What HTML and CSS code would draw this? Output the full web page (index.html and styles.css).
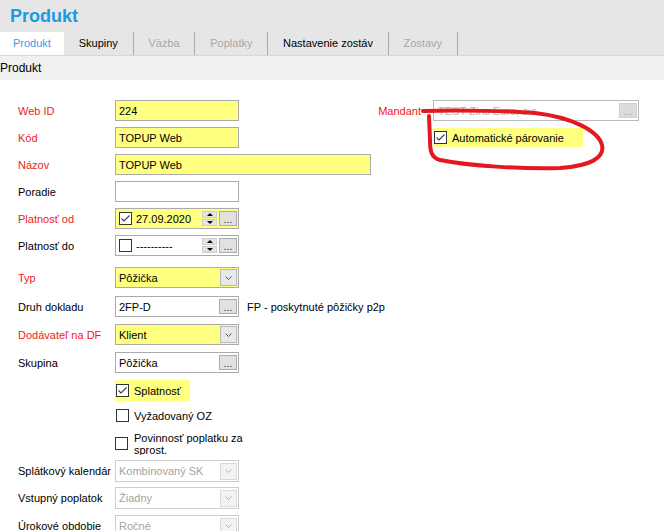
FILE: index.html
```html
<!DOCTYPE html>
<html lang="sk">
<head>
<meta charset="utf-8">
<title>Produkt</title>
<link rel="stylesheet" href="styles.css">
</head>
<body>
<div class="page">
  <header class="app-header">
    <h1 class="app-title">Produkt</h1>
    <nav class="tabs">
      <span class="tab tab-active">Produkt</span>
      <span class="tab">Skupiny</span>
      <span class="tab tab-disabled">Väzba</span>
      <span class="tab tab-disabled">Poplatky</span>
      <span class="tab">Nastavenie zostáv</span>
      <span class="tab tab-disabled">Zostavy</span>
    </nav>
  </header>
  <div class="section-strip">Produkt</div>

  <main class="form-area">
    <div class="form-col">
      <div class="row">
        <span class="lbl req">Web ID</span>
        <div class="field hl"><span class="val">224</span></div>
      </div>
      <div class="row">
        <span class="lbl req">Kód</span>
        <div class="field hl"><span class="val">TOPUP Web</span></div>
      </div>
      <div class="row">
        <span class="lbl req">Názov</span>
        <div class="field wide hl"><span class="val">TOPUP Web</span></div>
      </div>
      <div class="row">
        <span class="lbl">Poradie</span>
        <div class="field"><span class="val"></span></div>
      </div>
      <div class="row">
        <span class="lbl req">Platnosť od</span>
        <div class="field hl">
          <span class="cb"><svg width="11" height="11" viewBox="0 0 11 11"><polyline points="1.5,5.5 4,8 9.5,2.5" fill="none" stroke="#3c3c3c" stroke-width="1.1"/></svg></span>
          <span class="val date">27.09.2020</span>
          <span class="spin"><span class="spin-btn up"></span><span class="spin-btn down"></span></span>
          <span class="ellip">...</span>
        </div>
      </div>
      <div class="row">
        <span class="lbl">Platnosť do</span>
        <div class="field">
          <span class="cb"></span>
          <span class="val date">----------</span>
          <span class="spin"><span class="spin-btn up"></span><span class="spin-btn down"></span></span>
          <span class="ellip">...</span>
        </div>
      </div>
      <div class="row mt-11">
        <span class="lbl req">Typ</span>
        <div class="field hl">
          <span class="val">Pôžička</span>
          <span class="dd"><svg width="7" height="4" viewBox="0 0 7 4"><polyline points="0.5,0.5 3.5,3.5 6.5,0.5" fill="none" stroke="#555"/></svg></span>
        </div>
      </div>
      <div class="row mt-8">
        <span class="lbl">Druh dokladu</span>
        <div class="field">
          <span class="val">2FP-D</span>
          <span class="ellip">...</span>
        </div>
        <span class="note">FP - poskytnuté pôžičky p2p</span>
      </div>
      <div class="row mt-7">
        <span class="lbl req">Dodávateľ na DF</span>
        <div class="field hl">
          <span class="val">Klient</span>
          <span class="dd"><svg width="7" height="4" viewBox="0 0 7 4"><polyline points="0.5,0.5 3.5,3.5 6.5,0.5" fill="none" stroke="#555"/></svg></span>
        </div>
      </div>
      <div class="row mt-7">
        <span class="lbl">Skupina</span>
        <div class="field">
          <span class="val">Pôžička</span>
          <span class="ellip">...</span>
        </div>
      </div>
      <div class="row mt-7">
        <span class="lbl"></span>
        <div class="check hl">
          <span class="cb"><svg width="11" height="11" viewBox="0 0 11 11"><polyline points="1.5,5.5 4,8 9.5,2.5" fill="none" stroke="#3c3c3c" stroke-width="1.1"/></svg></span>
          <span class="check-text">Splatnosť</span>
        </div>
      </div>
      <div class="row mt-4">
        <span class="lbl"></span>
        <div class="check">
          <span class="cb"></span>
          <span class="check-text">Vyžadovaný OZ</span>
        </div>
      </div>
      <div class="row row-multi mt-5">
        <span class="lbl"></span>
        <div class="check check-multi">
          <span class="cb"></span>
          <span class="multi"><span class="multi-inner">Povinnosť poplatku za sprost.</span></span>
        </div>
      </div>
      <div class="row h22 mt-5">
        <span class="lbl">Splátkový kalendár</span>
        <div class="field disabled">
          <span class="val">Kombinovaný SK</span>
          <span class="dd dd-disabled"><svg width="7" height="4" viewBox="0 0 7 4"><polyline points="0.5,0.5 3.5,3.5 6.5,0.5" fill="none" stroke="#b4b4b4"/></svg></span>
        </div>
      </div>
      <div class="row h22 mt-5">
        <span class="lbl">Vstupný poplatok</span>
        <div class="field disabled">
          <span class="val">Žiadny</span>
          <span class="dd dd-disabled"><svg width="7" height="4" viewBox="0 0 7 4"><polyline points="0.5,0.5 3.5,3.5 6.5,0.5" fill="none" stroke="#b4b4b4"/></svg></span>
        </div>
      </div>
      <div class="row h22 mt-6">
        <span class="lbl">Úrokové obdobie</span>
        <div class="field disabled">
          <span class="val">Ročné</span>
          <span class="dd dd-disabled"><svg width="7" height="4" viewBox="0 0 7 4"><polyline points="0.5,0.5 3.5,3.5 6.5,0.5" fill="none" stroke="#b4b4b4"/></svg></span>
        </div>
      </div>
    </div>

    <div class="side-col">
      <div class="row">
        <span class="side-lbl req">Mandant</span>
        <div class="field mandant">
          <span class="val">TEST Zinc Euro, a.s.</span>
          <span class="ellip ellip-disabled">...</span>
        </div>
      </div>
      <div class="auto-row hl">
        <span class="cb"><svg width="11" height="11" viewBox="0 0 11 11"><polyline points="1.5,5.5 4,8 9.5,2.5" fill="none" stroke="#3c3c3c" stroke-width="1.1"/></svg></span>
        <span class="check-text">Automatické párovanie</span>
      </div>
    </div>
  </main>

  <svg class="annotation" width="664" height="531" viewBox="0 0 664 531">
    <path d="M 423 111 C 460 110, 510 111, 535 113 C 570 117, 598 130, 602 145 C 605 158, 590 166, 560 168 C 520 169, 470 166, 440 160 C 431 158, 430 150, 430 140 L 429 116" fill="none" stroke="#e3191f" stroke-width="4" stroke-linecap="round" stroke-linejoin="round"/>
  </svg>
</div>
</body>
</html>
```

FILE: styles.css
```css
html, body {
  margin: 0;
  padding: 0;
  overflow: hidden;
}

body {
  font-family: "Liberation Sans", Arial, sans-serif;
  font-size: 11px;
  color: #000;
  background: #fff;
}

.page {
  position: relative;
  width: 664px;
  height: 531px;
  overflow: hidden;
}

/* header + tabs */
.app-header {
  background: #e6e6e6;
}

.app-title {
  margin: 0;
  height: 32px;
  line-height: 33px;
  padding-left: 10px;
  font-size: 18px;
  font-weight: bold;
  color: #1b9be3;
}

.tabs {
  display: flex;
  height: 23px;
}

.tab {
  padding: 0 14.8px;
  line-height: 23px;
  border-right: 1px solid #a9a9a9;
  white-space: nowrap;
}

.tab-active {
  background: #fff;
  color: #3a9de2;
  padding: 0 13px;
  border-right: none;
}

.tab-disabled {
  color: #a8a8a8;
}

.section-strip {
  box-sizing: border-box;
  height: 25px;
  line-height: 24px;
  background: #f0f0f0;
  border-top: 1px solid #d7d7d7;
  font-size: 12px;
}

/* form */
.form-area {
  display: flex;
  padding-top: 20px;
}

.form-col {
  width: 372px;
  flex: none;
  box-sizing: border-box;
  padding-left: 18px;
}

.row {
  display: flex;
  align-items: center;
  height: 21px;
  margin-top: 6px;
}

.row:first-child {
  margin-top: 0;
}

.row.h22 { height: 22px; }
.row-multi { height: 24px; }

.mt-4 { margin-top: 4px; }
.mt-5 { margin-top: 5px; }
.mt-6 { margin-top: 6px; }
.mt-7 { margin-top: 7px; }
.mt-8 { margin-top: 8px; }
.mt-11 { margin-top: 11px; }

.lbl {
  width: 97px;
  flex: none;
  white-space: nowrap;
}

.req {
  color: #f01a1a;
}

.field {
  box-sizing: border-box;
  height: 100%;
  width: 124px;
  flex: none;
  border: 1px solid #ababab;
  background: #fff;
  display: flex;
  align-items: center;
  padding-left: 3px;
}

.field.wide {
  width: 256px;
}

.hl {
  background: #ffff80;
}

.val {
  flex: 1;
  white-space: nowrap;
  overflow: hidden;
}

.date {
  margin-left: 4px;
}

.field.disabled {
  border-color: #cccccc;
  color: #a3a3a3;
}

.note {
  margin-left: 8px;
  white-space: nowrap;
}

/* checkbox */
.cb {
  box-sizing: border-box;
  width: 13px;
  height: 13px;
  flex: none;
  border: 1px solid #333;
  background: #fff;
  display: flex;
  align-items: center;
  justify-content: center;
}

.check {
  display: flex;
  align-items: center;
  height: 100%;
  box-sizing: border-box;
  padding-left: 1px;
}

.check.hl {
  width: 75px;
}

.check-text {
  margin-left: 5px;
  white-space: nowrap;
}

.check-multi {
  padding-left: 0;
}

.multi {
  align-self: flex-end;
  height: 21px;
  width: 115px;
  overflow: hidden;
  margin-left: 6px;
  line-height: 12px;
}

.multi-inner {
  display: block;
  margin-top: -2px;
}

/* buttons */
.ellip {
  box-sizing: border-box;
  width: 18px;
  height: 15px;
  flex: none;
  margin-right: 1px;
  border: 1px solid #adadad;
  background: #e1e1e1;
  font-size: 11px;
  line-height: 14px;
  text-align: center;
  color: #333;
}

.ellip-disabled {
  border-color: #d0d0d0;
  background: #dcdcdc;
  color: #a0a0a0;
}

.dd {
  box-sizing: border-box;
  width: 17px;
  height: 17px;
  flex: none;
  margin-right: 1px;
  border: 1px solid #b9b9b9;
  background: #e9e9e9;
  display: flex;
  align-items: center;
  justify-content: center;
}

.dd-disabled {
  border-color: #d9d9d9;
  background: #f3f3f3;
}

.spin {
  display: flex;
  flex-direction: column;
  gap: 1px;
  margin-right: 2px;
  flex: none;
}

.spin-btn {
  box-sizing: border-box;
  width: 15px;
  height: 7px;
  background: #e4e4e4;
  border: 1px solid #cfcfcf;
  display: flex;
  align-items: center;
  justify-content: center;
}

.spin-btn.up::after {
  content: "";
  border-left: 3px solid transparent;
  border-right: 3px solid transparent;
  border-bottom: 3px solid #000;
}

.spin-btn.down::after {
  content: "";
  border-left: 3px solid transparent;
  border-right: 3px solid transparent;
  border-top: 3px solid #000;
}

/* right column */
.side-col {
  flex: none;
}

.side-lbl {
  width: 49px;
  flex: none;
  text-align: right;
  margin-right: 12px;
}

.field.mandant {
  width: 206px;
  border-color: #b9b9b9;
  color: #b3b3b3;
}

.field.mandant .val {
  padding-left: 1px;
}

.auto-row {
  display: flex;
  align-items: center;
  box-sizing: border-box;
  width: 150px;
  height: 19px;
  margin: 7px 0 0 61px;
  padding-left: 1px;
}

/* hand-drawn annotation over the screenshot */
.annotation {
  position: absolute;
  left: 0;
  top: 0;
  pointer-events: none;
}
```
